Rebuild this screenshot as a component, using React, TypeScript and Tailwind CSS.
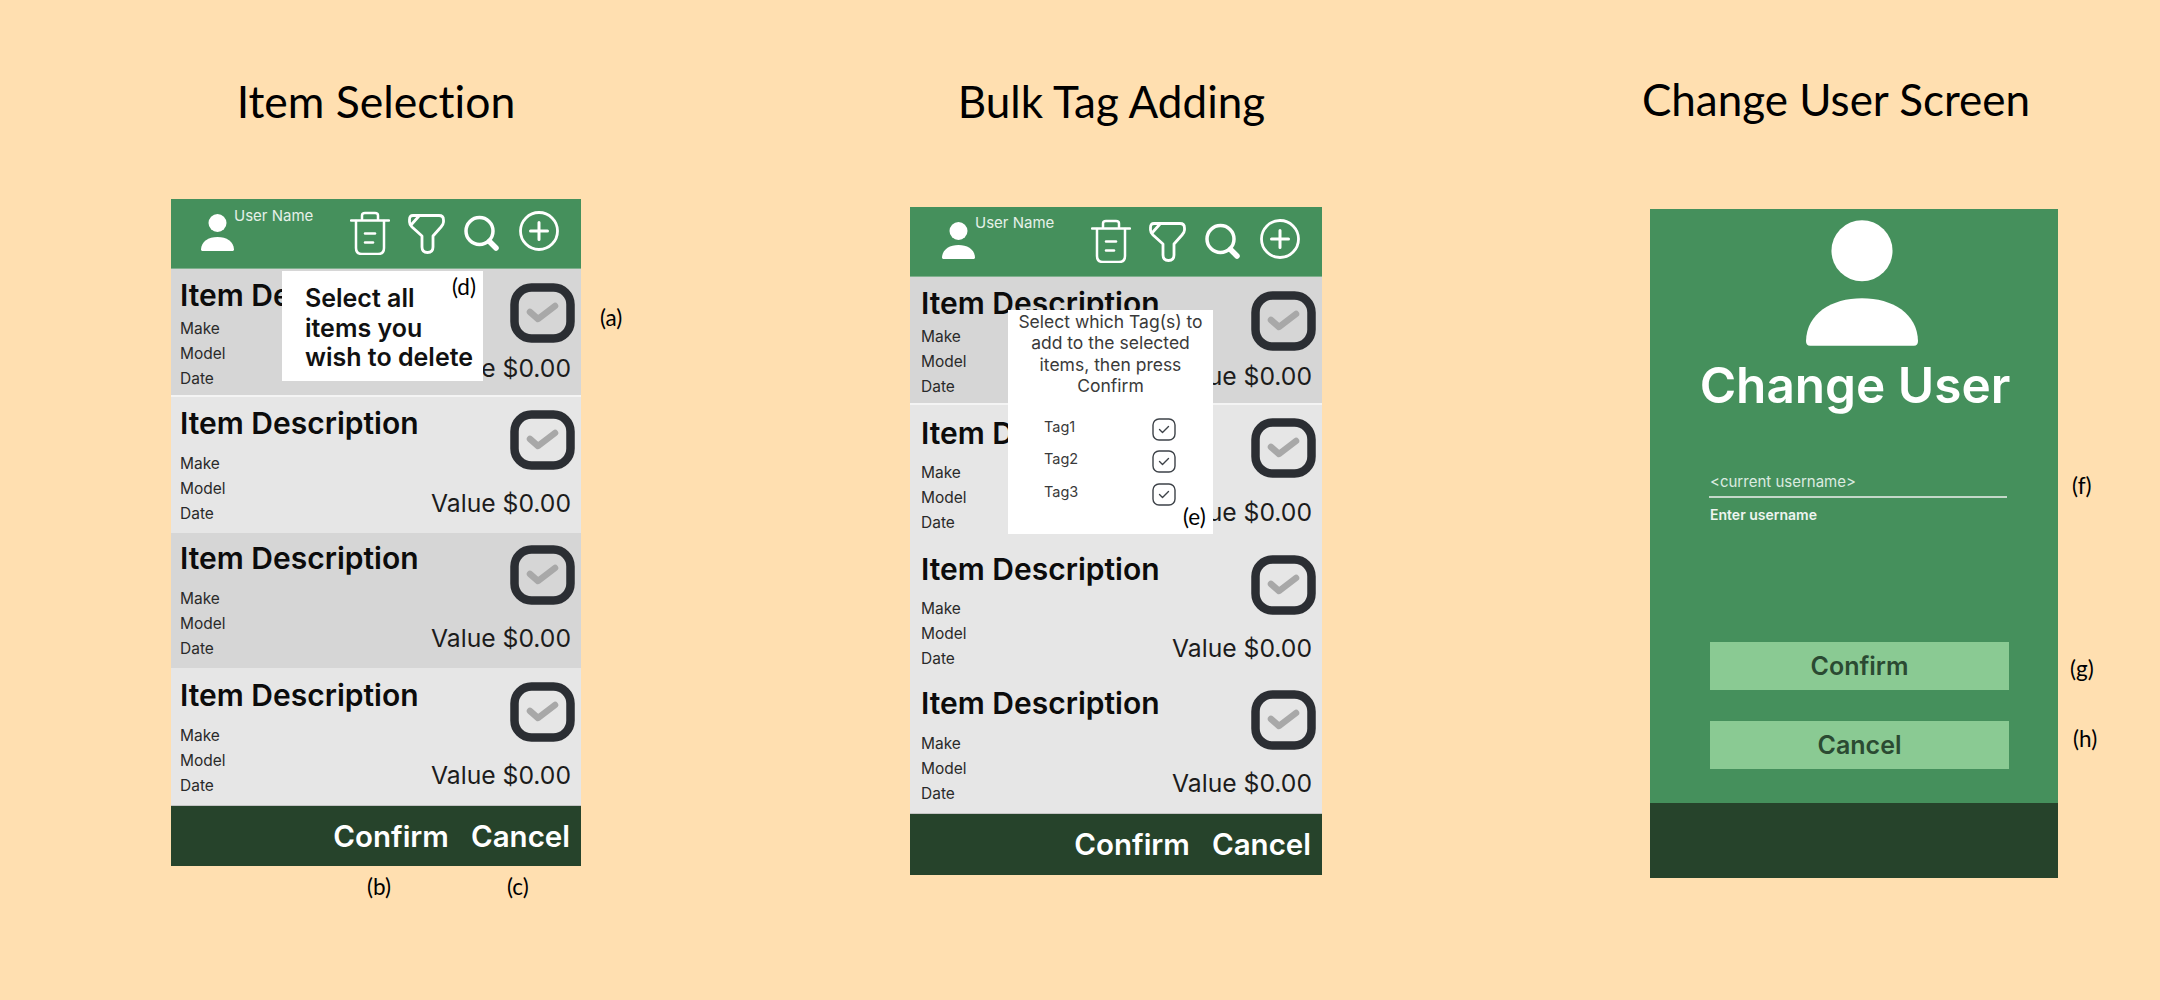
import React from "react";

const inter = "font-['Inter',sans-serif]";
const lato = "font-['Lato',sans-serif]";

function UserIcon({ w, h }: { w: number; h: number }) {
  return (
    <svg width={w} height={h} viewBox="0 0 33 37" fill="#fff" className="shrink-0">
      <circle cx="16.5" cy="9" r="9" />
      <path d="M1.2 37 Q0 37 0 35.6 C0.2 27.5 7.5 23 16.5 23 C25.5 23 32.8 27.5 33 35.6 Q33 37 31.8 37 Z" />
    </svg>
  );
}

function Trash() {
  return (
    <svg width="40" height="44" viewBox="0 0 40 44" fill="none" stroke="#fff" strokeWidth="2.5" strokeLinecap="round" strokeLinejoin="round">
      <path d="M1 9.5 H39" />
      <path d="M12 8.5 V4.5 Q12 2 15 2 H25 Q28 2 28 4.5 V8.5" />
      <path d="M6 10 V37 Q6 43 12 43 H28 Q34 43 34 37 V10" />
      <path d="M15 22.5 H25" />
      <path d="M15 31.5 H23" />
    </svg>
  );
}

function Funnel() {
  return (
    <svg width="37" height="41" viewBox="0 0 37 41" fill="none" stroke="#fff" strokeWidth="2.8" strokeLinecap="round" strokeLinejoin="round">
      <path d="M5 1.5 H31 Q35.5 1.5 35.5 6 V8 Q35.5 10 33 13 L25 22 V33 Q25 38.5 19.5 38.5 Q14 38.5 14 33 V22 L4 13 Q1.5 10.5 1.5 8 V5.5 Q1.5 1.5 5 1.5 Z" />
      <path d="M11 2 L3 11" />
    </svg>
  );
}

function Search() {
  return (
    <svg width="37" height="40" viewBox="0 0 37 40" fill="none" stroke="#fff" strokeLinecap="round">
      <circle cx="16.5" cy="20" r="13.5" strokeWidth="3.5" />
      <path d="M26.5 30.5 L33 37" strokeWidth="5.5" />
    </svg>
  );
}

function Plus() {
  return (
    <svg width="40" height="40" viewBox="0 0 40 40" fill="none" stroke="#fff" strokeLinecap="round">
      <circle cx="20" cy="20" r="18.5" strokeWidth="2.8" />
      <path d="M11.5 20 H28.5 M20 11.5 V28.5" strokeWidth="3" />
    </svg>
  );
}

function BigCheck() {
  return (
    <svg width="65" height="60" viewBox="0 0 65 60" fill="none">
      <rect x="4.5" y="4.5" width="56" height="51" rx="17" stroke="#2b2e33" strokeWidth="8.5" />
      <path d="M20 29 L28 36 L45 23" stroke="#a8a8a8" strokeWidth="6.5" strokeLinecap="round" strokeLinejoin="round" />
    </svg>
  );
}

function SmallCheck() {
  return (
    <svg width="24" height="23" viewBox="0 0 24 23" fill="none">
      <rect x="1" y="1" width="22" height="21" rx="6" stroke="#3d4248" strokeWidth="1.4" />
      <path d="M7.5 11.5 L10.5 14.5 L16.5 8.5" stroke="#3d4248" strokeWidth="1.4" strokeLinecap="round" strokeLinejoin="round" />
    </svg>
  );
}

function Header({ wide }: { wide?: boolean }) {
  return (
    <div className="h-[70px] bg-[#45905c] flex items-start shrink-0 border-b border-[#7fb08d]">
      <div className={`${wide ? "ml-[32px]" : "ml-[30px]"} mt-[15px]`}>
        <UserIcon w={33} h={37} />
      </div>
      <div className={`${inter} ${wide ? "mt-[5px]" : "mt-[6px]"} text-[15px] leading-[22px] text-[#e6f0e9] w-[116px] whitespace-nowrap`}>User Name</div>
      <div className="flex items-start mt-[12px]">
        <Trash />
        <div className="ml-[18px] mt-[3px]"><Funnel /></div>
        <div className="ml-[18px]"><Search /></div>
        <div className="ml-[19px]"><Plus /></div>
      </div>
    </div>
  );
}

function Row({ variant, dark, wide }: { variant: 1 | 2 | 3 | 4; dark?: boolean; wide?: boolean }) {
  const shell = {
    1: "h-[128px] border-b-2 border-[#f4f4f4]",
    2: "h-[136px]",
    3: "h-[135px]",
    4: "h-[137px]",
  }[variant];
  const textTop = wide
    ? { 1: "pt-[8px]", 2: "pt-[10px]", 3: "pt-[10px]", 4: "pt-[9px]" }[variant]
    : { 1: "pt-[8px]", 2: "pt-[8px]", 3: "pt-[7px]", 4: "pt-[9px]" }[variant];
  const checkTop = wide
    ? { 1: "pt-[14px]", 2: "pt-[13px]", 3: "pt-[14px]", 4: "pt-[14px]" }[variant]
    : { 1: "pt-[14px]", 2: "pt-[13px]", 3: "pt-[12px]", 4: "pt-[14px]" }[variant];
  const first = variant === 1;
  const tight = wide && (variant === 2 || variant === 3);
  const valueGap = first ? "mt-[10px]" : wide && variant === 2 ? "mt-[19px]" : "mt-[18px]";
  return (
    <div className={`${dark ? "bg-[#d6d6d6]" : "bg-[#e6e6e6]"} ${shell} flex justify-between shrink-0`}>
      <div className={`${inter} ${wide ? "pl-[11px]" : "pl-[9px]"} ${textTop}`}>
        <div className={`text-[30px] leading-[36px] font-semibold text-[#0c0c0c] whitespace-nowrap ${first ? "mb-[3px]" : tight ? "mb-[9px]" : "mb-[10px]"}`}>Item Description</div>
        <div className="text-[15.5px] leading-[25px] text-[#2a2a2a]">Make</div>
        <div className="text-[15.5px] leading-[25px] text-[#2a2a2a]">Model</div>
        <div className="text-[15.5px] leading-[25px] text-[#2a2a2a]">Date</div>
      </div>
      <div className={`flex flex-col items-end ${checkTop} pr-[6px]`}>
        <BigCheck />
        <div className={`${inter} text-[24.7px] leading-[30px] text-[#1c1c1c] pr-[4px] whitespace-nowrap ${valueGap}`}>Value $0.00</div>
      </div>
    </div>
  );
}

function Footer({ h }: { h: string }) {
  return (
    <div className={`${h} bg-[#26432b] shrink-0 flex items-center justify-end pr-[11px] gap-[22px] ${inter} text-[29.5px] font-semibold text-white border-t border-[#c4c4c4]`}>
      <span>Confirm</span>
      <span>Cancel</span>
    </div>
  );
}

function Note({ children, className }: { children: React.ReactNode; className: string }) {
  return <span className={`absolute ${lato} text-[22.5px] leading-[26px] text-black whitespace-nowrap ${className}`}>{children}</span>;
}

function Title({ children, className }: { children: React.ReactNode; className: string }) {
  return (
    <div className={`h-[60px] flex justify-center items-center whitespace-nowrap ${lato} text-black [font-variant-ligatures:none] ${className}`}>
      <span>{children}</span>
    </div>
  );
}

export default function App() {
  return (
    <div className="w-[2160px] h-[1000px] bg-[#ffdfb0] flex items-start overflow-hidden">
      <div className="ml-[171px] w-[410px] pt-[71px]">
        <Title className="text-[44.5px]">Item Selection</Title>
        <div className="relative mt-[68px] h-[667px] flex flex-col">
          <Header />
          <Row variant={1} dark />
          <Row variant={2} />
          <Row variant={3} dark />
          <Row variant={4} />
          <Footer h="h-[61px]" />
          <div className={`absolute left-[111px] top-[72px] w-[201px] h-[110px] bg-white pl-[23px] pt-[13px] ${inter} text-[25px] leading-[29.5px] font-semibold text-[#111]`}>
            Select all<br />items you<br />
            <span className="whitespace-nowrap">wish to delete</span>
          </div>
          <Note className="left-[281px] top-[75px]">(d)</Note>
          <Note className="left-[429px] top-[106px]">(a)</Note>
          <Note className="left-[196px] top-[675px]">(b)</Note>
          <Note className="left-[336px] top-[675px]">(c)</Note>
        </div>
      </div>

      <div className="ml-[329px] w-[412px] pt-[71px]">
        <Title className="text-[44px] pr-[9px]">Bulk Tag Adding</Title>
        <div className="relative mt-[76px] h-[668px] flex flex-col">
          <Header wide />
          <Row variant={1} dark wide />
          <Row variant={2} wide />
          <Row variant={3} wide />
          <Row variant={4} wide />
          <Footer h="h-[62px]" />
          <div className={`absolute left-[98px] top-[103px] w-[205px] h-[224px] bg-white ${inter} text-[#3a3a3a]`}>
            <div className="text-[17.5px] leading-[21.3px] text-center pt-[1px]">
              Select which Tag(s) to<br />add to the selected<br />items, then press<br />Confirm
            </div>
            <div className="mt-[22px] pl-[36px] pr-[37px] text-[14.5px] flex flex-col gap-[9px]">
              <div className="flex justify-between items-center h-[23px]"><span className="-mt-[5px]">Tag1</span><SmallCheck /></div>
              <div className="flex justify-between items-center h-[23px]"><span className="-mt-[5px]">Tag2</span><SmallCheck /></div>
              <div className="flex justify-between items-center h-[23px] mt-[1px]"><span className="-mt-[5px]">Tag3</span><SmallCheck /></div>
            </div>
          </div>
          <Note className="left-[273px] top-[297px]">(e)</Note>
        </div>
      </div>

      <div className="ml-[328px] w-[408px] pt-[69px]">
        <Title className="text-[44px] pr-[36px]">Change User Screen</Title>
        <div className="relative mt-[80px] h-[669px] flex flex-col bg-[#45905c]">
          <div className="flex-1 flex flex-col items-center pt-[11px]">
            <div className="ml-[16px]"><UserIcon w={112} h={126} /></div>
            <div className={`${inter} text-[49.5px] leading-[60px] font-semibold text-white mt-[9px] ml-[2px]`}>Change User</div>
            <div className={`${inter} self-start ml-[59px] w-[298px] mt-[56px]`}>
              <div className="border-b-2 border-[#c3d8c9] text-[15px] leading-[22px] text-[#dcebe0] pl-[1px] pb-[3px]">&lt;current username&gt;</div>
              <div className="text-[14px] leading-[20px] font-semibold text-[#eef5f0] pl-[1px] mt-[7px]">Enter username</div>
            </div>
            <button className={`${inter} self-start ml-[60px] mt-[117px] pt-[1px] w-[299px] h-[48px] bg-[#8aca93] text-[25px] font-semibold text-[#2b4a32]`}>Confirm</button>
            <button className={`${inter} self-start ml-[60px] mt-[31px] pt-[1px] w-[299px] h-[48px] bg-[#8aca93] text-[25px] font-semibold text-[#2b4a32]`}>Cancel</button>
          </div>
          <div className="h-[75px] bg-[#26432b] shrink-0" />
          <Note className="left-[422px] top-[264px]">(f)</Note>
          <Note className="left-[420px] top-[447px]">(g)</Note>
          <Note className="left-[423px] top-[517px]">(h)</Note>
        </div>
      </div>
    </div>
  );
}
